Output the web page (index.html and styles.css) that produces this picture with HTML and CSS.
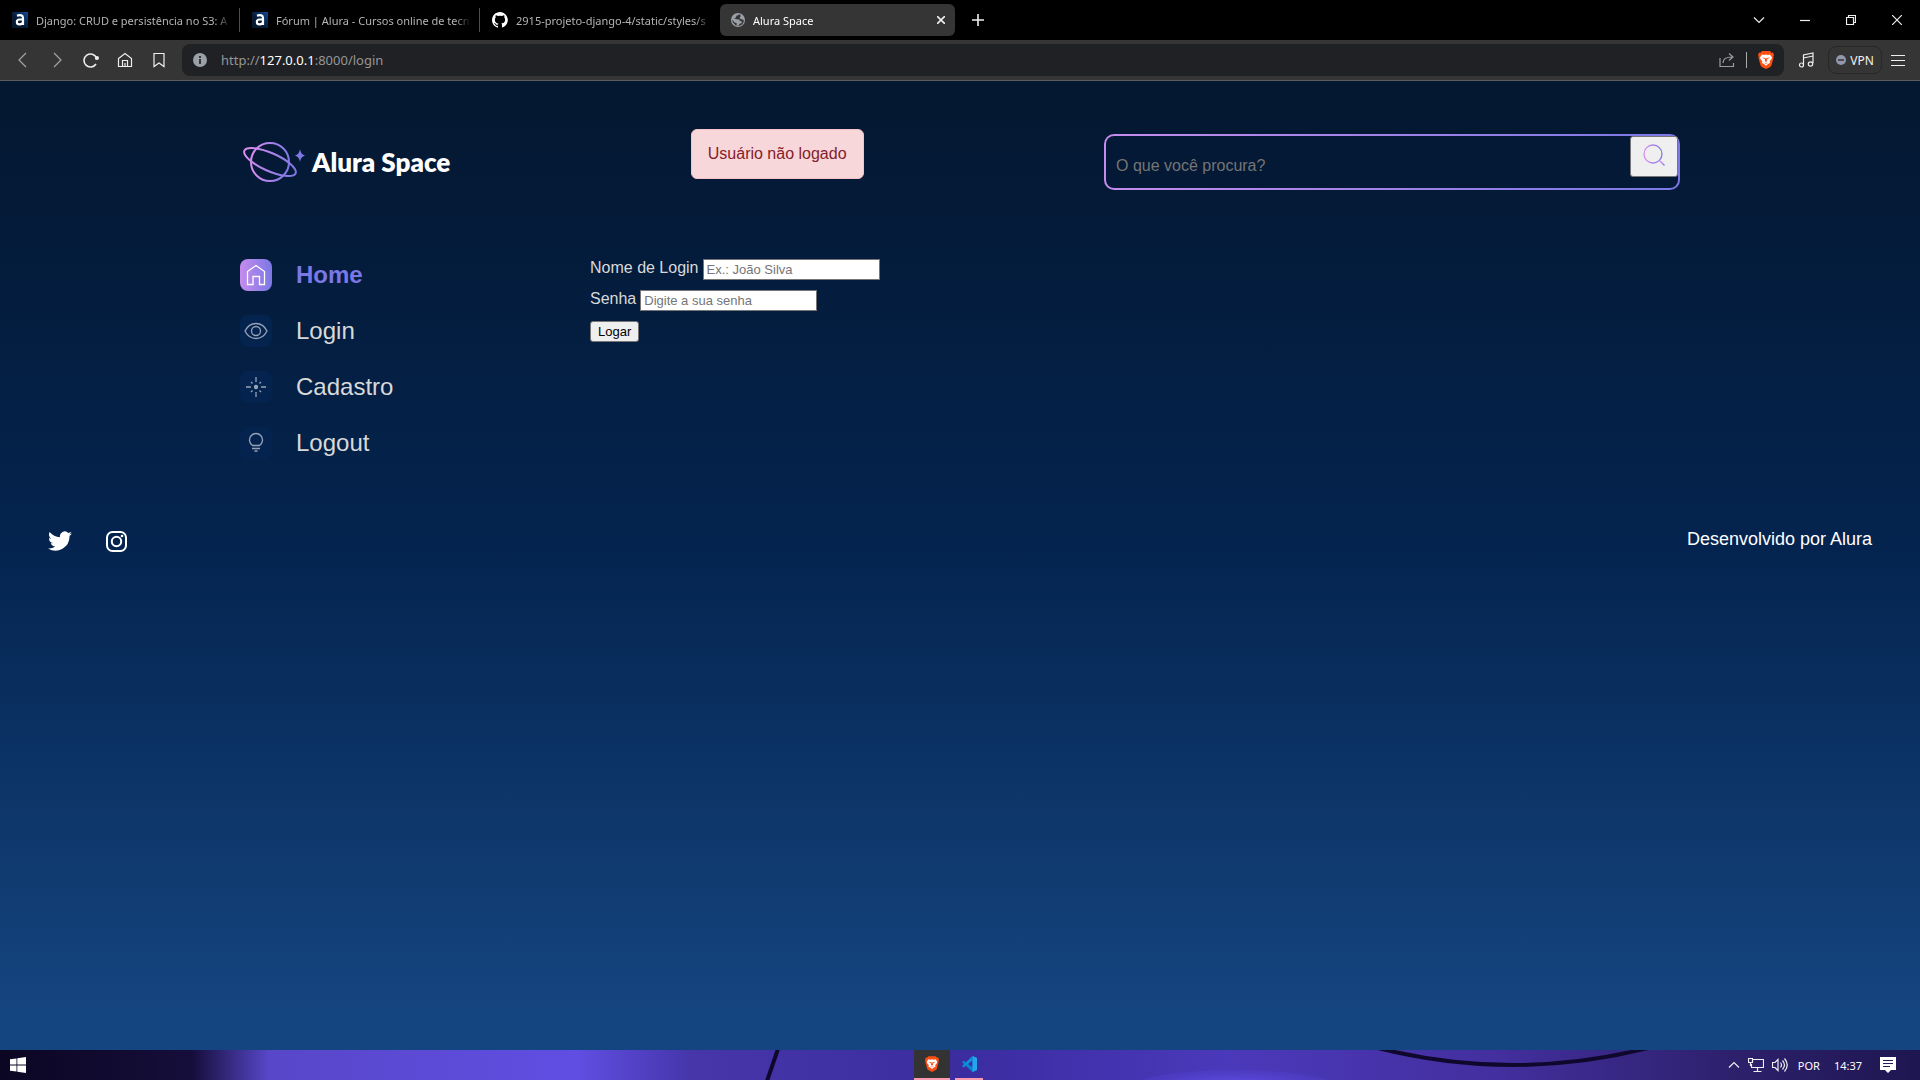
FILE: index.html
```html
<!DOCTYPE html>
<html lang="pt-BR">
<head>
<meta charset="utf-8">
<title>Alura Space</title>
<link rel="stylesheet" href="styles.css">
</head>
<body>
<svg width="0" height="0" class="defs" aria-hidden="true">
  <defs>
    <linearGradient id="brand" x1="0" x2="1" y1="0" y2="0"><stop offset="0" stop-color="#da8df0"/><stop offset="1" stop-color="#7b78e5"/></linearGradient>
    <linearGradient id="alura" x1="0" x2="1" y1="1" y2="0"><stop offset=".4" stop-color="#051933"/><stop offset="1" stop-color="#0c4a94"/></linearGradient>
    <symbol id="brave" viewBox="0 0 16 18"><path fill="#fb4f14" d="M4 0h8l1.500 1.700L15 1.500l1 2.500-.6 1.600.2 1-2 7.400c-.3 1-1 1.600-1.800 2.200L8 18l-3.800-1.800c-.8-.6-1.500-1.200-1.800-2.200L.4 6.600l.2-1L0 4l1-2.500 1.500.2z"/><path fill="#fff" d="M4 3.500l2 .5 2-.5 2 .5 2-.5 2 3-.5 1.500-1.800 2.200.3 1.800-2 1-2 1.800L6 13l-2-1 .3-1.800L2.500 8 2 6.500z"/><path fill="#fb4f14" d="M4 6.300l3 .7-.4 1.300zM12 6.300L9 7l.4 1.300zM7.300 7h1.400l.5 3L8 11l-1.200-1zM5.500 11.500L8 12.800l2.500-1.300L8 12z"/></symbol>
    <symbol id="alura-icon" viewBox="0 0 16 16"><path fill="url(#alura)" d="M0 0h16v16H0z"/><path fill="none" stroke="#fff" stroke-width="2.200" d="M5 3.600c3.500-1 6-.5 6 2.400v7M11 7.500H7.500C4 7.500 4 12.300 7.500 12.300c2 0 3.500-1 3.500-2.500"/></symbol>
  </defs>
</svg>

<div class="browser">
  <nav class="tabs" aria-label="Abas">
    <a class="tab" href="#"><svg width="16" height="16"><use href="#alura-icon"/></svg><span>Django: CRUD e persistência no S3: A</span></a>
    <a class="tab" href="#"><svg width="16" height="16"><use href="#alura-icon"/></svg><span>Fórum | Alura - Cursos online de tecn</span></a>
    <a class="tab" href="#"><svg width="16" height="16" viewBox="0 0 16 16"><path fill="#fff" d="M8 0C3.600 0 0 3.600 0 8c0 3.500 2.300 6.500 5.500 7.600.4.100.5-.2.500-.4v-1.400c-2.200.5-2.700-1-2.700-1-.4-.9-.9-1.200-.9-1.200-.7-.5.100-.5.100-.5.800.1 1.200.8 1.200.8.700 1.200 1.900.9 2.300.7.100-.5.300-.9.500-1.100-1.800-.2-3.600-.9-3.600-4 0-.9.300-1.600.8-2.100-.1-.2-.4-1 .1-2.100 0 0 .7-.2 2.200.8a7.600 7.600 0 0 1 4 0c1.500-1 2.200-.8 2.200-.8.400 1.100.2 1.900.1 2.100.5.600.8 1.300.8 2.100 0 3.100-1.900 3.700-3.700 3.900.3.300.6.800.6 1.500v2.200c0 .2.100.5.600.4A8 8 0 0 0 8 0z"/></svg><span>2915-projeto-django-4/static/styles/s</span></a>
    <a class="tab tab-active" href="#"><svg width="14" height="14" viewBox="0 0 14 14"><circle cx="7" cy="7" r="7" fill="#9aa0a6"/><path fill="#353535" d="M8 1.200c-.3 1-1.200 1.500-2.500 1.400L5 4.500 3 5.200l2.500 1 3 .3L8.800 8l2.500.4-1 1.800-1.700.5-.8 1.800-2.300.1.300-2.400L3.500 9.500 1.200 6.400l.5 2.800 3 3.300 3.300.6 3.200-1.500 1.800-3.300-1-1.800-2.300-.3-1-1.500 1-1.700-.5-1.200z"/></svg><span>Alura Space</span><button class="icon-button" type="button" aria-label="Fechar aba"><svg width="8" height="8" viewBox="0 0 8 8"><path class="line bold" d="M0 0l8 8M8 0L0 8"/></svg></button></a>
    <button class="icon-button new-tab" type="button" aria-label="Nova aba"><svg width="12" height="12" viewBox="0 0 12 12"><path class="line bold" d="M6 0v12M0 6h12"/></svg></button>
    <div class="window-controls">
      <button class="icon-button" type="button" aria-label="Procurar abas"><svg width="12" height="12" viewBox="0 0 12 12"><path class="line" d="M1 3.500l5 5 5-5"/></svg></button>
      <button class="icon-button" type="button" aria-label="Minimizar"><svg width="10" height="10" viewBox="0 0 10 10"><path class="line" d="M0 5.500h10"/></svg></button>
      <button class="icon-button" type="button" aria-label="Restaurar"><svg width="10" height="10" viewBox="0 0 10 10"><path class="line" d="M.5 2.500h7v7h-7zM2.500 2V.5h7v7H8"/></svg></button>
      <button class="icon-button" type="button" aria-label="Fechar"><svg width="10" height="10" viewBox="0 0 10 10"><path class="line" d="M0 0l10 10M10 0L0 10"/></svg></button>
    </div>
  </nav>

  <div class="toolbar">
    <div class="nav-buttons">
      <button class="icon-button dim" type="button" aria-label="Voltar"><svg width="16" height="16" viewBox="0 0 16 16"><path class="line" d="M11 1L4 8l7 7"/></svg></button>
      <button class="icon-button dim" type="button" aria-label="Avançar"><svg width="16" height="16" viewBox="0 0 16 16"><path class="line" d="M5 1l7 7-7 7"/></svg></button>
      <button class="icon-button" type="button" aria-label="Recarregar"><svg width="16" height="16" viewBox="0 0 16 16"><path class="line bold" d="M13.500 6A6.500 6.500 0 1 0 13 12M12 6.500h2"/><circle cx="14" cy="6" r="2" fill="#eee"/></svg></button>
      <button class="icon-button" type="button" aria-label="Início"><svg width="16" height="16" viewBox="0 0 16 16"><path class="line" d="M1.500 6.500L8 1.500l6.500 5v8h-13zM5.500 14V8.500h5V14M8 11v3"/></svg></button>
      <button class="icon-button" type="button" aria-label="Favoritos"><svg width="16" height="16" viewBox="0 0 16 16"><path class="line" d="M3 1.500h10v13l-5-3.500-5 3.500z"/></svg></button>
    </div>
    <div class="address">
      <svg width="14" height="14" viewBox="0 0 14 14"><circle cx="7" cy="7" r="7" fill="#9aa0a6"/><path fill="#35363a" d="M6 3h2v2H6zM6 6h2v5H6z"/></svg>
      <span class="url">http://<b>127.0.0.1</b>:8000/login</span>
      <svg width="16" height="16" viewBox="0 0 16 16" class="dim"><path class="line" d="M1 6v8.500h13.500V11M4 11c0-4 3-6 9-6M10 1.500L14 5l-4 3.500"/></svg>
      <i class="divider"></i>
      <svg width="16" height="18"><use href="#brave"/></svg>
    </div>
    <button class="icon-button music" type="button" aria-label="Música"><svg width="16" height="16" viewBox="0 0 16 16"><path class="line" d="M5.500 13V3l9.500-2v10M5.500 6L15 4"/><circle class="line" cx="3.500" cy="13" r="2"/><circle class="line" cx="12.500" cy="12" r="2.200"/></svg></button>
    <button class="vpn" type="button"><svg width="10" height="10" viewBox="0 0 10 10"><circle cx="5" cy="5" r="5" fill="#9496ac"/><path stroke="#353535" stroke-width="1.500" d="M2 5h6"/></svg>VPN</button>
    <button class="icon-button menu-button" type="button" aria-label="Menu"><svg width="14" height="12" viewBox="0 0 14 12"><path class="line" d="M0 1.500h14M0 6.500h14M0 11.500h14"/></svg></button>
  </div>
</div>

<div class="page">
  <header class="site-header">
    <a class="logo" href="#">
      <svg width="64" height="44" viewBox="0 0 64 44"><g fill="none" stroke="url(#brand)" stroke-width="2"><circle cx="30" cy="22" r="19"/><ellipse cx="30" cy="22" rx="28" ry="9" transform="rotate(24 30 22)"/></g><path fill="#7b78e5" d="M60 9c.8 4 2 5.500 5 6.500-3 1-4.200 2.500-5 6.500-.8-4-2-5.500-5-6.500 3-1 4.200-2.500 5-6.500z"/></svg>
      <span>Alura Space</span>
    </a>
    <p class="alert" role="alert">Usuário não logado</p>
    <form class="search">
      <input type="search" placeholder="O que você procura?" aria-label="Buscar">
      <button type="button" aria-label="Pesquisar"><svg width="24" height="24" viewBox="0 0 24 24"><g fill="none" stroke="url(#brand)" stroke-width="1.300"><circle cx="11" cy="11" r="9"/><path d="M17.500 17.500l5 5"/></g></svg></button>
    </form>
  </header>

  <main class="content">
    <nav class="side-menu" aria-label="Menu">
      <a class="current" href="#"><svg width="32" height="32" viewBox="0 0 32 32"><path class="glyph" stroke-width="1.500" d="M7.500 12.500L16 6.500l8.500 6v13h-5v-8h-6.500v8H7.500z"/></svg>Home</a>
      <a href="#"><svg width="32" height="32" viewBox="0 0 32 32"><path class="glyph" d="M5 16c5-10 17-10 22 0-5 10-17 10-22 0z"/><circle class="glyph" cx="16" cy="16" r="4.500"/></svg>Login</a>
      <a href="#"><svg width="32" height="32" viewBox="0 0 32 32"><circle cx="16" cy="16" r="2.200" fill="#97a3b6"/><path class="glyph" d="M16 6v5M16 21v5M6 16h5M21 16h5M11 11l1.500 1.500M19.500 19.500L21 21M21 11l-1.500 1.500M12.500 19.500L11 21"/></svg>Cadastro</a>
      <a href="#"><svg width="32" height="32" viewBox="0 0 32 32"><path class="glyph" d="M12.500 18.500a6.500 6.500 0 1 1 7 0zM12 21.500h8M14.500 24h3"/></svg>Logout</a>
    </nav>
    <form class="login">
      <div><label for="nome">Nome de Login</label> <input id="nome" type="text" placeholder="Ex.: João Silva"></div>
      <div><label for="senha">Senha</label> <input id="senha" type="password" placeholder="Digite a sua senha"></div>
      <div><button type="button">Logar</button></div>
    </form>
  </main>

  <footer class="site-footer">
    <div class="social">
      <a href="#" aria-label="Twitter"><svg width="24" height="24" viewBox="0 0 24 24"><path fill="#fff" d="M24 4.600a10 10 0 0 1-2.800.8 5 5 0 0 0 2.200-2.700 10 10 0 0 1-3.100 1.200A4.900 4.900 0 0 0 12 8.300 14 14 0 0 1 1.700 3.100a4.900 4.900 0 0 0 1.500 6.600 5 5 0 0 1-2.200-.6 4.900 4.900 0 0 0 3.900 4.900 5 5 0 0 1-2.200.1 4.900 4.900 0 0 0 4.600 3.400A10 10 0 0 1 0 19.500a14 14 0 0 0 21.500-12.400A10 10 0 0 0 24 4.600z"/></svg></a>
      <a href="#" aria-label="Instagram"><svg width="24" height="24" viewBox="0 0 24 24"><g fill="none" stroke="#fff" stroke-width="2"><rect x="3" y="3" width="19" height="19" rx="5.500"/><circle cx="12.500" cy="12.500" r="4.700"/></g><circle cx="18" cy="7" r="1.300" fill="#fff"/></svg></a>
    </div>
    <p>Desenvolvido por Alura</p>
  </footer>
</div>

<div class="taskbar">
  <svg class="wallpaper" viewBox="0 0 1920 30" preserveAspectRatio="none" aria-hidden="true">
    <defs>
      <linearGradient id="wall"><stop offset="0" stop-color="#0b0622"/><stop offset=".1" stop-color="#150e3b"/><stop offset=".14" stop-color="#5847c8"/><stop offset=".3" stop-color="#604ee3"/><stop offset=".36" stop-color="#4636aa"/><stop offset=".5" stop-color="#3b2ca0"/><stop offset=".64" stop-color="#4b39bb"/><stop offset=".78" stop-color="#432f9e"/><stop offset=".9" stop-color="#2d216d"/><stop offset="1" stop-color="#1e1650"/></linearGradient>
      <radialGradient id="glow"><stop offset="0" stop-color="#6650ed"/><stop offset="1" stop-color="#5040cc" stop-opacity=".4"/></radialGradient>
    </defs>
    <path fill="url(#wall)" d="M0 0h1920v30H0z"/>
    <ellipse cx="1235" cy="36" rx="100" ry="16" fill="url(#glow)"/>
    <path fill="none" stroke="#10082c" stroke-width="4" d="M778-1L767 31M1370-4Q1513 34 1656-4"/>
  </svg>
  <button class="icon-button start" type="button" aria-label="Iniciar"><svg width="16" height="16" viewBox="0 0 16 16"><path fill="#fff" d="M0 2.300l6.500-.9v6.200H0zM7.300 1.200L16 0v7.600H7.300zM0 8.400h6.500v6.200L0 13.700zM7.300 8.400H16V16l-8.700-1.200z"/></svg></button>
  <div class="apps">
    <button class="icon-button app app-active" type="button" aria-label="Brave"><svg width="14" height="16"><use href="#brave"/></svg></button>
    <button class="icon-button app" type="button" aria-label="Visual Studio Code"><svg width="18" height="16" viewBox="0 0 16 16"><path fill="#0c82d0" d="M11.500 0L16 2v12l-4.500 2L1 6.200 2.500 4.500l9 6.800z"/><path fill="#24a5ee" d="M11.500 0L16 2v12l-4.500 2z"/><path fill="#1090d8" d="M11.500 4.500l-9 7L1 10 11.500 0z"/></svg></button>
  </div>
  <div class="tray">
    <svg width="12" height="12" viewBox="0 0 12 12"><path class="line" d="M1 8.500l5-5 5 5"/></svg>
    <svg width="16" height="16" viewBox="0 0 16 16"><path class="line" d="M5 2.500h10.500v8H3.500V7M9.500 11v3.500M5.500 14.500h8M.5 1.500h4v4h-4zM2.500 6v3"/></svg>
    <svg width="16" height="16" viewBox="0 0 16 16"><path class="line" d="M.5 5.500H3l3-3v11l-3-3H.5zM8.500 5.500q2 2.500 0 5M10.500 3.500q4 4.500 0 9M12.500 1.500q5.500 6.500 0 13"/></svg>
    <span>POR</span>
    <time>14:37</time>
    <svg width="16" height="16" viewBox="0 0 16 16"><path fill="#fff" d="M0 0h16v13h-5l-3 3-3-3H0z"/><path stroke="#241a5c" d="M3 3.500h10M3 6.500h10M3 9.500h7"/></svg>
  </div>
</div>
</body>
</html>
```
FILE: styles.css
```css
* { box-sizing: border-box; }

body {
  margin: 0;
  min-height: 100vh;
  display: flex;
  flex-direction: column;
  font-family: "Liberation Sans", Arial, sans-serif;
  font-size: 16px;
  color: #d9d9d9;
}

a { color: inherit; text-decoration: none; }
p { margin: 0; }
svg { flex: none; display: block; }
.defs { position: absolute; }

.line { fill: none; stroke: #eee; stroke-width: 1.2; }
.bold { stroke-width: 1.6; }
.dim { opacity: 0.6; }

.icon-button {
  display: flex;
  align-items: center;
  justify-content: center;
  padding: 0;
  border: 0;
  background: none;
}

/* Browser window */
.browser,
.taskbar { font-family: "Noto Sans", "Open Sans", sans-serif; font-size: 11px; }

.tabs {
  display: flex;
  align-items: center;
  height: 40px;
  background: #000;
}

.tab {
  display: flex;
  align-items: center;
  gap: 8px;
  width: 240px;
  height: 24px;
  padding: 0 4px 0 12px;
  border-right: 1px solid #4d4d4d;
  color: #b4b4b4;
}

.tab span {
  flex: 1;
  overflow: hidden;
  white-space: nowrap;
  mask-image: linear-gradient(90deg, #000 90%, transparent 98%);
}

.tab:nth-child(3) { border-color: transparent; }

.tab-active {
  width: 235px;
  height: 32px;
  padding: 0 10px 0 11px;
  border: 0;
  border-radius: 6px;
  background: #353535;
  color: #fff;
}

.new-tab { width: 46px; height: 32px; }

.window-controls { display: flex; margin-left: auto; }
.window-controls .icon-button { width: 46px; height: 40px; }

.toolbar {
  display: flex;
  align-items: center;
  height: 41px;
  padding: 0 6px;
  border-bottom: 1px solid #5e5e5e;
  background: #353535;
}

.nav-buttons { display: flex; }
.nav-buttons .icon-button { width: 34px; height: 32px; }

.address {
  flex: 1;
  display: flex;
  align-items: center;
  height: 32px;
  margin-left: 6px;
  padding: 0 10px 0 11px;
  border-radius: 8px;
  background: #202124;
}

.url { flex: 1; margin-left: 14px; font-size: 13px; color: #969696; }
.url b { font-weight: 400; color: #fff; }
.divider { width: 1px; height: 16px; margin: 0 11px; background: #aaa; }

.music { width: 44px; height: 32px; }

.vpn {
  display: flex;
  align-items: center;
  justify-content: center;
  gap: 4px;
  width: 54px;
  height: 28px;
  padding: 0;
  border: 1px solid #272727;
  border-radius: 8px;
  background: none;
  font: inherit;
  font-size: 12px;
  color: #f2f2f2;
}

.menu-button { width: 32px; height: 32px; }

/* Alura Space */
.page {
  flex: 1;
  background: linear-gradient(180deg, #041832 4%, #04244f 48%, #154580 97%);
}

.site-header {
  display: flex;
  align-items: center;
  justify-content: space-between;
  padding: 48px 12.5%;
}

.logo { display: flex; align-items: center; gap: 8px; }
.logo svg { overflow: visible; }
.logo span {
  font-family: Lato, sans-serif;
  font-size: 26px;
  font-weight: 800;
  line-height: 48px;
  color: #fff;
}

.alert {
  margin-bottom: 16px;
  padding: 12px 16px;
  border: 1px solid #f5c2c7;
  border-radius: 6px;
  background: #f8d7da;
  line-height: 24px;
  color: #842029;
}

.search {
  display: flex;
  align-items: flex-start;
  width: 40%;
  height: 56px;
  border: 2px solid transparent;
  border-radius: 10px;
  background:
    linear-gradient(#041935, #041935) padding-box,
    linear-gradient(90deg, #c58ced, #7b78e5) border-box;
}

.search input {
  flex: 1;
  padding: 21px 10px 12px;
  border: 0;
  background: none;
  font: inherit;
  color: #d9d9d9;
}

.search input::placeholder { color: #757575; }

.search button {
  width: 48px;
  height: 41px;
  padding: 6px 11px 10px;
  border: 1px solid #767676;
  border-radius: 3px;
  background: #efefef;
}

.content {
  display: flex;
  padding: 16px 12.5% 0;
}

.side-menu {
  display: flex;
  flex-direction: column;
  gap: 24px;
  width: 350px;
}

.side-menu a {
  display: flex;
  align-items: center;
  gap: 24px;
  font-size: 24px;
  line-height: 32px;
}

.side-menu svg { border-radius: 8px; background: #04244f; }
.glyph { fill: none; stroke: #97a3b6; stroke-width: 1.3; }

.side-menu .current { font-weight: 700; color: #7b78e5; }
.current svg { background: linear-gradient(90deg, #c58ced, #7b78e5); }
.current .glyph { stroke: #fff; }

.login { display: flex; flex-direction: column; gap: 10px; }
.login div { display: flex; gap: 4px; height: 21px; }
.login label { line-height: 18px; }

.login input {
  width: 177px;
  height: 21px;
  padding: 1px 3px;
  border: 1px solid #767676;
  background: #fff;
  font: 13px "Liberation Sans", Arial, sans-serif;
}

.login input::placeholder { color: #757575; }

.login button {
  height: 21px;
  padding: 1px 7px;
  border: 1px solid #767676;
  border-radius: 3px;
  background: #efefef;
  font: 13px "Liberation Sans", Arial, sans-serif;
  color: #000;
}

.site-footer {
  display: flex;
  align-items: flex-start;
  justify-content: space-between;
  margin-top: 64px;
  padding: 6px 48px;
  font-size: 18px;
  line-height: 20px;
  color: #fff;
}

.social { display: flex; gap: 32px; }

/* Taskbar */
.taskbar {
  position: relative;
  display: grid;
  grid-template-columns: 1fr auto 1fr;
  height: 30px;
  background: #3b2ca0;
  color: #fff;
}

.wallpaper { position: absolute; inset: 0; width: 100%; height: 100%; }
.start, .apps, .tray { z-index: 1; }
.start { width: 36px; }
.apps { display: flex; gap: 5px; padding-right: 24px; }
.app { width: 28px; border-bottom: 2px solid #f99aae; }
.app-active { width: 36px; background: #333; }

.tray {
  display: flex;
  align-items: center;
  justify-content: flex-end;
  gap: 8px;
  padding-right: 24px;
}

.tray span { margin-left: 2px; }
.tray time { margin: 0 10px 0 6px; }
```
